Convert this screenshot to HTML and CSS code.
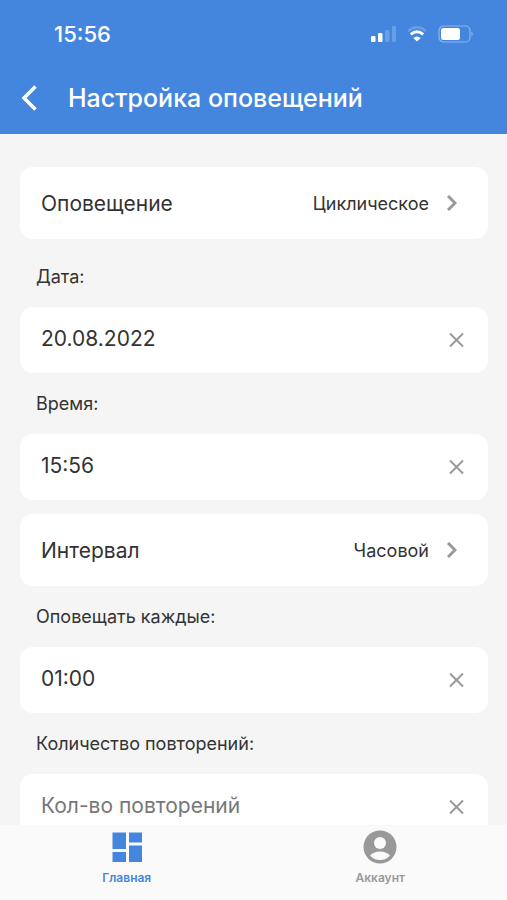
FILE: index.html
```html
<!DOCTYPE html>
<html lang="ru">
<head>
<meta charset="utf-8">
<meta name="viewport" content="width=device-width, initial-scale=1">
<title>Настройка оповещений</title>
<link rel="stylesheet" href="styles.css">
</head>
<body>
<div class="screen">
  <header class="header">
    <div class="status">
      <span class="clock">15:56</span>
      <div class="status-icons">
        <svg width="26" height="18" viewBox="0 0 26 18" aria-hidden="true">
          <g fill="#fff">
            <rect x="1" y="11" width="4.500" height="6" rx="1"/>
            <rect x="8" y="8" width="4.500" height="9" rx="1"/>
            <rect x="15" y="5" width="4.500" height="12" rx="1" opacity=".2"/>
            <rect x="22" y="1" width="4" height="16" rx="1" opacity=".2"/>
          </g>
        </svg>
        <svg width="20" height="18" viewBox="0 0 20 18" fill="none" stroke="#fff" aria-hidden="true">
          <path d="M1 6.200Q10-1.500 19 6.200" stroke-width="2.400" opacity=".2"/>
          <path d="M3.800 9.400Q10 4 16.200 9.400" stroke-width="2.800"/>
          <path d="M6.300 13Q10 10 13.700 13L10 16.500Z" fill="#fff" stroke="none"/>
        </svg>
        <svg width="36" height="18" viewBox="0 0 36 18" aria-hidden="true">
          <rect x="1" y="1" width="31" height="16" rx="4.500" fill="none" stroke="#fff" stroke-width="1.200" opacity=".4"/>
          <rect x="3" y="3" width="19" height="12" rx="2.500" fill="#fff"/>
          <path d="M33.500 6.500Q36 9 33.500 11.500Z" fill="#fff" opacity=".4"/>
        </svg>
      </div>
    </div>
    <div class="title-bar">
      <button class="back" type="button" aria-label="Назад">
        <svg width="18" height="26" viewBox="0 0 18 26" fill="none" stroke="#fff" stroke-width="3.500" aria-hidden="true"><path d="M15.500 1.500L4 13L15.500 24.500"/></svg>
      </button>
      <h1>Настройка оповещений</h1>
    </div>
  </header>

  <main class="content">
    <button class="card picker first" type="button">
      <span class="picker-name">Оповещение</span>
      <span class="picker-value">Циклическое</span>
      <svg class="chevron" width="10" height="16" viewBox="0 0 10 16" aria-hidden="true"><path d="M1 1L8 8L1 15"/></svg>
    </button>

    <label class="label" for="date">Дата:</label>
    <div class="card field">
      <input id="date" type="text" value="20.08.2022">
      <button class="clear" type="button" aria-label="Очистить дату">
        <svg width="16" height="16" viewBox="0 0 16 16" aria-hidden="true"><path d="M1 1.500L14 14.500M14 1.500L1 14.500"/></svg>
      </button>
    </div>

    <label class="label" for="time">Время:</label>
    <div class="card field">
      <input id="time" type="text" value="15:56">
      <button class="clear" type="button" aria-label="Очистить время">
        <svg width="16" height="16" viewBox="0 0 16 16" aria-hidden="true"><path d="M1 1.500L14 14.500M14 1.500L1 14.500"/></svg>
      </button>
    </div>

    <button class="card picker interval" type="button">
      <span class="picker-name">Интервал</span>
      <span class="picker-value">Часовой</span>
      <svg class="chevron" width="10" height="16" viewBox="0 0 10 16" aria-hidden="true"><path d="M1 1L8 8L1 15"/></svg>
    </button>

    <label class="label" for="every">Оповещать каждые:</label>
    <div class="card field">
      <input id="every" type="text" value="01:00">
      <button class="clear" type="button" aria-label="Очистить период">
        <svg width="16" height="16" viewBox="0 0 16 16" aria-hidden="true"><path d="M1 1.500L14 14.500M14 1.500L1 14.500"/></svg>
      </button>
    </div>

    <label class="label" for="count">Количество повторений:</label>
    <div class="card field">
      <input id="count" type="text" placeholder="Кол-во повторений">
      <button class="clear" type="button" aria-label="Очистить количество">
        <svg width="16" height="16" viewBox="0 0 16 16" aria-hidden="true"><path d="M1 1.500L14 14.500M14 1.500L1 14.500"/></svg>
      </button>
    </div>
  </main>

  <nav class="tabs">
    <a class="tab active" href="#home">
      <svg width="34" height="34" viewBox="0 0 34 34" fill="currentColor" aria-hidden="true">
        <path d="M2.500 2.500h13.500v16.500h-13.500zM19 2.500h13v10H19zM2.500 22h13.500v10h-13.500zM19 15.500h13v16.500H19z"/>
      </svg>
      <span>Главная</span>
    </a>
    <a class="tab" href="#account">
      <svg width="34" height="34" viewBox="0 0 34 34" aria-hidden="true">
        <circle cx="17" cy="17" r="16.500" fill="currentColor"/>
        <circle cx="17" cy="13" r="6" fill="#fafafa"/>
        <path d="M7 25.500Q11 21.500 17 21.500T27 25.500Q23 30 17 30T7 25.500Z" fill="#fafafa"/>
      </svg>
      <span>Аккаунт</span>
    </a>
  </nav>
</div>
</body>
</html>
```
FILE: styles.css
```css
* {
  box-sizing: border-box;
}

body {
  margin: 0;
  background: #f5f5f5;
  color: #333;
  font-family: Inter, "Liberation Sans", sans-serif;
}

button,
input {
  margin: 0;
  padding: 0;
  border: 0;
  background: none;
  color: inherit;
  font: inherit;
}

svg {
  display: block;
  flex: none;
}

.screen {
  display: flex;
  flex-direction: column;
  height: 100vh;
}

.header {
  flex: none;
  padding: 16px 20px 16px;
  background: #4486de;
  color: #fff;
}

.status {
  display: flex;
  align-items: center;
  justify-content: space-between;
  height: 36px;
  padding: 0 13px 0 34px;
}

.clock {
  font-size: 22px;
  font-weight: 500;
}

.status-icons {
  display: flex;
  align-items: center;
  gap: 11px;
}

.title-bar {
  display: flex;
  align-items: center;
  gap: 30px;
  margin-top: 26px;
  height: 40px;
}

.back {
  width: 18px;
}

h1 {
  margin: 0;
  font-size: 25px;
  font-weight: 500;
  line-height: 32px;
}

.content {
  flex: 1;
  min-height: 0;
  padding: 33px 19px 0 20px;
  overflow: hidden;
}

.card {
  display: flex;
  align-items: center;
  width: 100%;
  border-radius: 13px;
  background: #fff;
}

.picker {
  height: 72px;
  padding: 0 31px 0 21px;
  text-align: left;
}

.picker.first {
  margin-bottom: 7px;
}

.picker.interval {
  margin-top: 14px;
}

.picker-name {
  flex: 1;
  font-size: 21px;
}

.picker-value {
  margin-right: 18px;
  font-size: 18px;
}

.chevron {
  fill: none;
  stroke: #999;
  stroke-width: 3;
}

.field {
  height: 66px;
  padding: 0 23px 0 21px;
}

.field input {
  flex: 1;
  min-width: 0;
  height: 40px;
  padding-bottom: 3px;
  outline: 0;
  font-size: 21px;
}

.field input::placeholder {
  color: #777;
  opacity: 1;
}

.clear svg {
  fill: none;
  stroke: #999;
  stroke-width: 2;
}

.label {
  display: block;
  padding-left: 16px;
  font-size: 18px;
  line-height: 61px;
}

.tabs {
  display: flex;
  flex: none;
  height: 75px;
  background: #fafafa;
}

.tab {
  display: flex;
  flex: 1;
  flex-direction: column;
  align-items: center;
  gap: 5px;
  padding-top: 5px;
  color: #999;
  font-size: 12px;
  font-weight: 600;
  line-height: 18px;
  text-decoration: none;
}

.tab.active {
  color: #4486de;
}
```
